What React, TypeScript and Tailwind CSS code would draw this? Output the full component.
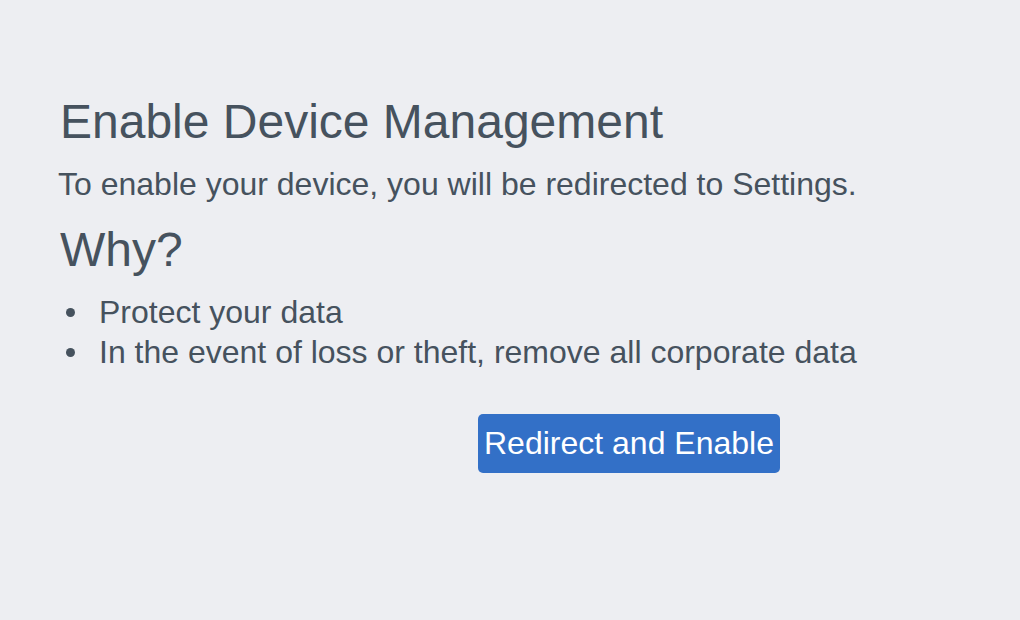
export default function App() {
  return (
    <div className="min-h-[620px] w-full bg-[#edeef2] pl-[60px] pt-[94px] font-['Liberation_Sans',Arial,sans-serif] text-[#46525e]">
      <h1 className="text-[48px] leading-[56px]">Enable Device Management</h1>
      <p className="mt-[14px] text-[32px] leading-[40px] -ml-[2px]">
        To enable your device, you will be redirected to Settings.
      </p>
      <h2 className="mt-[18px] text-[48px] leading-[56px]">Why?</h2>
      <ul className="mt-[14px] text-[32px] leading-[40px]">
        {['Protect your data', 'In the event of loss or theft, remove all corporate data'].map((item) => (
          <li key={item} className="flex items-center">
            <span className="ml-[6px] mr-[24px] h-[9px] w-[9px] rounded-full bg-[#46525e]" />
            {item}
          </li>
        ))}
      </ul>
      <div className="mt-[42px] pl-[418px]">
        <button className="rounded-[5px] bg-[#3370c7] px-[6px] py-[11px] text-[32px] leading-[37px] text-white">
          Redirect and Enable
        </button>
      </div>
    </div>
  );
}
